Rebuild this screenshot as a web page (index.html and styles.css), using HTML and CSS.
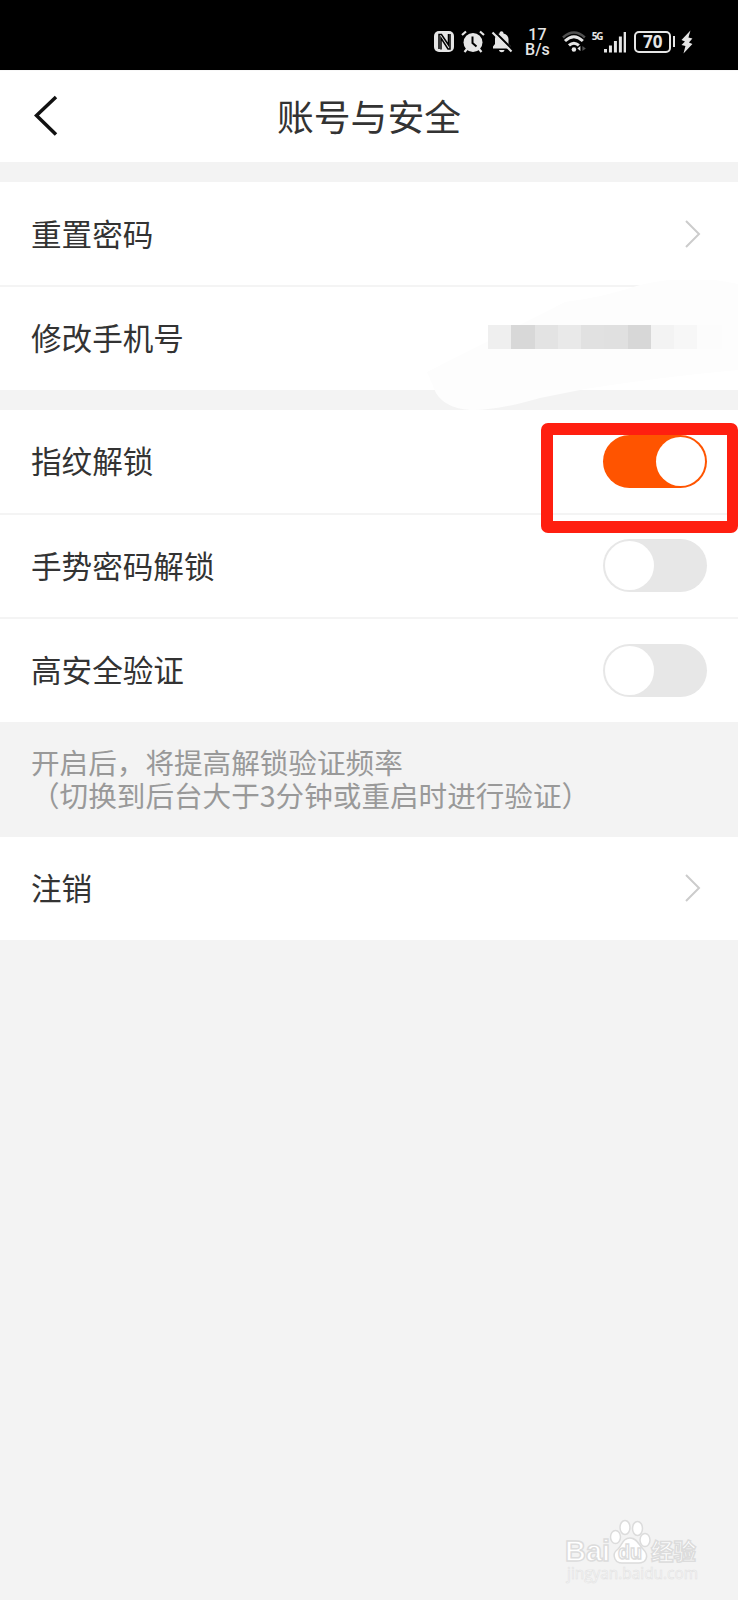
FILE: index.html
```html
<!DOCTYPE html>
<html lang="zh-CN">
<head>
    <meta charset="UTF-8">
    <meta name="viewport" content="width=device-width, initial-scale=1.0">
    <title>账号与安全</title>
    <link rel="stylesheet" href="styles.css">
</head>
<body>
    <div class="status-bar">
        <!-- nfc, alarm, muted bell -->
        <svg class="status-left" width="80" height="24" viewBox="0 0 80 24">
            <rect x="0" y="1" width="20" height="21" rx="5" fill="#e6e6e6"/>
            <path d="M5 19V4.500h2.500l7 10.500V4" fill="none" stroke="#000" stroke-width="1.500"/>
            <path d="M7 19.500V8l7 11h2V4" fill="none" stroke="#000" stroke-width="1.500"/>
            <circle cx="39" cy="12.500" r="9.500" fill="#e6e6e6"/>
            <path d="M28 5l4-3.500M50 5l-4-3.500M33 19l-2.500 3M45 19l2.500 3" stroke="#e6e6e6" stroke-width="2.200"/>
            <path d="M38.500 6.500v6.500l4 3.500" fill="none" stroke="#000" stroke-width="2"/>
            <path d="M59 18.500v-2l2-2.500v-5c0-3 2.500-5 4.500-5.500 0-3 4-3 4 0 3 .7 5 3 5 5.500v5l2.500 2.500v2zM65 20h5.500c-.5 3-5 3-5.500 0z" fill="#e6e6e6"/>
            <path d="M60.500 1.500l18 18" stroke="#000" stroke-width="2"/>
            <path d="M58.500 2.500l19 19" stroke="#e6e6e6" stroke-width="2.200"/>
        </svg>
        <div class="speed"><span>17</span><span>B/s</span></div>
        <svg class="wifi" width="25" height="24" viewBox="0 0 25 24">
            <path d="M1 7.500Q12 -2.500 23 7.500" fill="none" stroke="#505050" stroke-width="2.500"/>
            <path d="M3 11Q12 2.500 21 11M7 15.500q5-4.500 10 0" fill="none" stroke="#e6e6e6" stroke-width="3"/>
            <circle cx="12" cy="19.500" r="2.300" fill="#e6e6e6"/>
            <path d="M15.500 18.500l3-2.500v5z" fill="#e6e6e6"/>
            <path d="M20.500 16l3.500 2.500-3.500 2.500z" fill="#505050"/>
        </svg>
        <span class="net">5G</span>
        <svg class="signal" width="23" height="22" viewBox="0 0 23 22">
            <path d="M1.500 18v3.500M6.500 14.500v7M11.500 10v11.500M16.500 5.500v16M21.300 1v20.500" stroke="#e6e6e6" stroke-width="3"/>
        </svg>
        <span class="battery">70</span>
        <span class="battery-tip"></span>
        <svg class="bolt" width="12" height="24" viewBox="0 0 12 24">
            <path d="M9.500 0.500L0.500 10l3.500 1.500L0.500 15l4 1L2.500 23.500 11.500 14l-3.500-1.500 3.500-4-4-1z" fill="#e6e6e6"/>
        </svg>
    </div>

    <div class="header">
        <svg class="back" width="24" height="42" viewBox="0 0 24 42">
            <path d="M22 2L2.500 20.500 22 39.500" fill="none" stroke="#111" stroke-width="3.500"/>
        </svg>
        <h1>账号与安全</h1>
    </div>

    <div class="group">
        <div class="row">
            <span>重置密码</span>
            <svg class="arrow" width="16" height="28" viewBox="0 0 16 28"><path d="M1 1l13 13L1 27" fill="none" stroke="#ccc" stroke-width="2"/></svg>
        </div>
        <div class="row phone-row">
            <span>修改手机号</span>
            <!-- hidden phone number -->
            <svg class="phone-mask" width="338" height="140" viewBox="0 0 338 140">
                <path d="M165 22Q200 18 240 5Q290 -7 338 4V90Q260 97 185 109L140 118Q95 131 70 130Q45 128 36 113L27 92Z" fill="#fdfdfd"/>
                <g shape-rendering="crispEdges">
                    <rect x="88" y="45" width="23" height="24" fill="#efefef"/>
                    <rect x="111" y="45" width="24" height="24" fill="#d8d8d8"/>
                    <rect x="135" y="45" width="23" height="24" fill="#e3e3e3"/>
                    <rect x="158" y="45" width="23" height="24" fill="#e9e9e9"/>
                    <rect x="181" y="45" width="23" height="24" fill="#e1e1e1"/>
                    <rect x="204" y="45" width="24" height="24" fill="#e0e0e0"/>
                    <rect x="228" y="45" width="23" height="24" fill="#d7d7d7"/>
                    <rect x="251" y="45" width="23" height="24" fill="#f3f3f3"/>
                    <rect x="274" y="45" width="23" height="24" fill="#f7f7f7"/>
                    <rect x="297" y="45" width="25" height="24" fill="#fcfcfc"/>
                </g>
            </svg>
        </div>
    </div>

    <div class="group">
        <div class="row">
            <span>指纹解锁</span>
            <div class="switch on"></div>
            <div class="highlight"></div>
        </div>
        <div class="row">
            <span>手势密码解锁</span>
            <div class="switch"></div>
        </div>
        <div class="row">
            <span>高安全验证</span>
            <div class="switch"></div>
        </div>
    </div>

    <p class="note">开启后，将提高解锁验证频率<br>（切换到后台大于3分钟或重启时进行验证）</p>

    <div class="group last">
        <div class="row">
            <span>注销</span>
            <svg class="arrow" width="16" height="28" viewBox="0 0 16 28"><path d="M1 1l13 13L1 27" fill="none" stroke="#ccc" stroke-width="2"/></svg>
        </div>
    </div>

    <div class="watermark">
        <svg width="150" height="70" viewBox="0 0 150 70">
            <g fill="#fff" stroke="#dcdcdc" stroke-width="1.500">
                <text class="wm-logo" x="5" y="44" textLength="45" lengthAdjust="spacingAndGlyphs">Bai</text>
                <ellipse cx="55.500" cy="20" rx="5" ry="6.500"/>
                <ellipse cx="65" cy="10.500" rx="5" ry="7"/>
                <ellipse cx="77.500" cy="11.500" rx="5" ry="7"/>
                <ellipse cx="85" cy="23" rx="5" ry="6.500"/>
                <path d="M70 21c-7 0-8 7-12 11-4 3-5 6-3 10 2 5 8 4 15 4s14 1 16-4c2-4 0-7-3-10-4-4-6-11-13-11z"/>
                <text class="wm-du" x="58" y="42" textLength="24" lengthAdjust="spacingAndGlyphs">du</text>
                <text class="wm-cn" x="91" y="43" textLength="45" lengthAdjust="spacingAndGlyphs">经验</text>
            </g>
            <text class="wm-url" x="7" y="62" textLength="131" lengthAdjust="spacingAndGlyphs">jingyan.baidu.com</text>
        </svg>
    </div>
</body>
</html>
```
FILE: styles.css
```css
body {
    font-family: "Noto Sans CJK SC", sans-serif;
    background-color: #f3f3f3;
    color: #333;
    margin: 0;
    min-height: 1600px;
    display: flex;
    flex-direction: column;
    overflow-x: hidden;
}

.status-bar {
    height: 70px;
    box-sizing: border-box;
    background-color: #000;
    color: #e6e6e6;
    font-family: Roboto, sans-serif;
    display: flex;
    align-items: flex-start;
    padding: 30px 45px 0 434px;
}

.status-left {
    flex: none;
}

.speed {
    display: flex;
    flex-direction: column;
    align-items: center;
    width: 25px;
    margin: -2px 0 0 11px;
    font-size: 16px;
    line-height: 14.500px;
    font-weight: 500;
}

.wifi {
    margin-left: 12px;
}

.net {
    width: 12px;
    margin-left: 5px;
    font-family: "Open Sans", sans-serif;
    font-size: 10px;
    line-height: 12px;
    font-weight: bold;
    letter-spacing: -1px;
}

.signal {
    margin: 1px 0 0 0;
}

.battery {
    box-sizing: border-box;
    width: 37px;
    height: 22px;
    margin: 1px 0 0 8px;
    border: 2px solid #e6e6e6;
    border-radius: 5px;
    font-family: "Open Sans", sans-serif;
    font-size: 17px;
    line-height: 18px;
    font-weight: bold;
    text-align: center;
}

.battery-tip {
    width: 2px;
    height: 11px;
    margin: 6px 6px 0 2px;
    background-color: #e6e6e6;
}

.header {
    position: relative;
    height: 92px;
    box-sizing: border-box;
    background-color: #fff;
    display: flex;
    align-items: center;
    padding-left: 34px;
    border-top: 1px solid #f8f8f8;
}

.back {
    margin-top: -1px;
}

h1 {
    flex: 1;
    margin: 0 58px 4px 0;
    text-align: center;
    font-size: 36.8px;
    line-height: 54px;
    font-weight: 400;
}

.group {
    background-color: #fff;
    margin-top: 20px;
}

.group.last {
    margin-top: 0;
}

.row {
    position: relative;
    height: 103px;
    display: flex;
    align-items: center;
    justify-content: space-between;
    padding: 0 31px 0 31px;
    font-size: 30.6px;
    line-height: 44px;
}

.row > span {
    margin-bottom: 2px;
}

.row + .row {
    border-top: 2px solid #f4f4f4;
    height: 102.5px;
}

.arrow {
    margin-right: 6px;
}

.phone-mask {
    position: absolute;
    right: 0;
    top: -7px;
}

.switch {
    box-sizing: border-box;
    width: 104px;
    height: 53px;
    padding: 2px;
    border-radius: 27px;
    background-color: #e7e7e7;
    display: flex;
}

.switch::after {
    content: "";
    width: 49px;
    height: 49px;
    border-radius: 50%;
    background-color: #fff;
}

.switch.on {
    background-color: #ff5400;
    justify-content: flex-end;
}

/* red frame around the fingerprint switch */
.highlight {
    position: absolute;
    z-index: 1;
    left: 541px;
    top: 13px;
    box-sizing: border-box;
    width: 197px;
    height: 110px;
    border: 12px solid #ff1f10;
    border-right-width: 11px;
    border-radius: 7px;
}

.note {
    box-sizing: border-box;
    height: 115px;
    margin: 0;
    padding: 23px 31px 0;
    color: #999;
    font-size: 28.6px;
    line-height: 33.500px;
}

.watermark {
    height: 70px;
    margin: auto 28px 13px auto;
}

.wm-logo,
.wm-du {
    font-family: "Liberation Sans", sans-serif;
    font-weight: bold;
    font-size: 30px;
}

.wm-du {
    font-size: 21px;
}

.wm-cn {
    font-weight: bold;
    font-size: 23px;
}

.wm-url {
    font-family: "Open Sans", sans-serif;
    font-size: 16px;
    fill: #fafafa;
    stroke: #e2e2e2;
    stroke-width: 0.6px;
}
```
